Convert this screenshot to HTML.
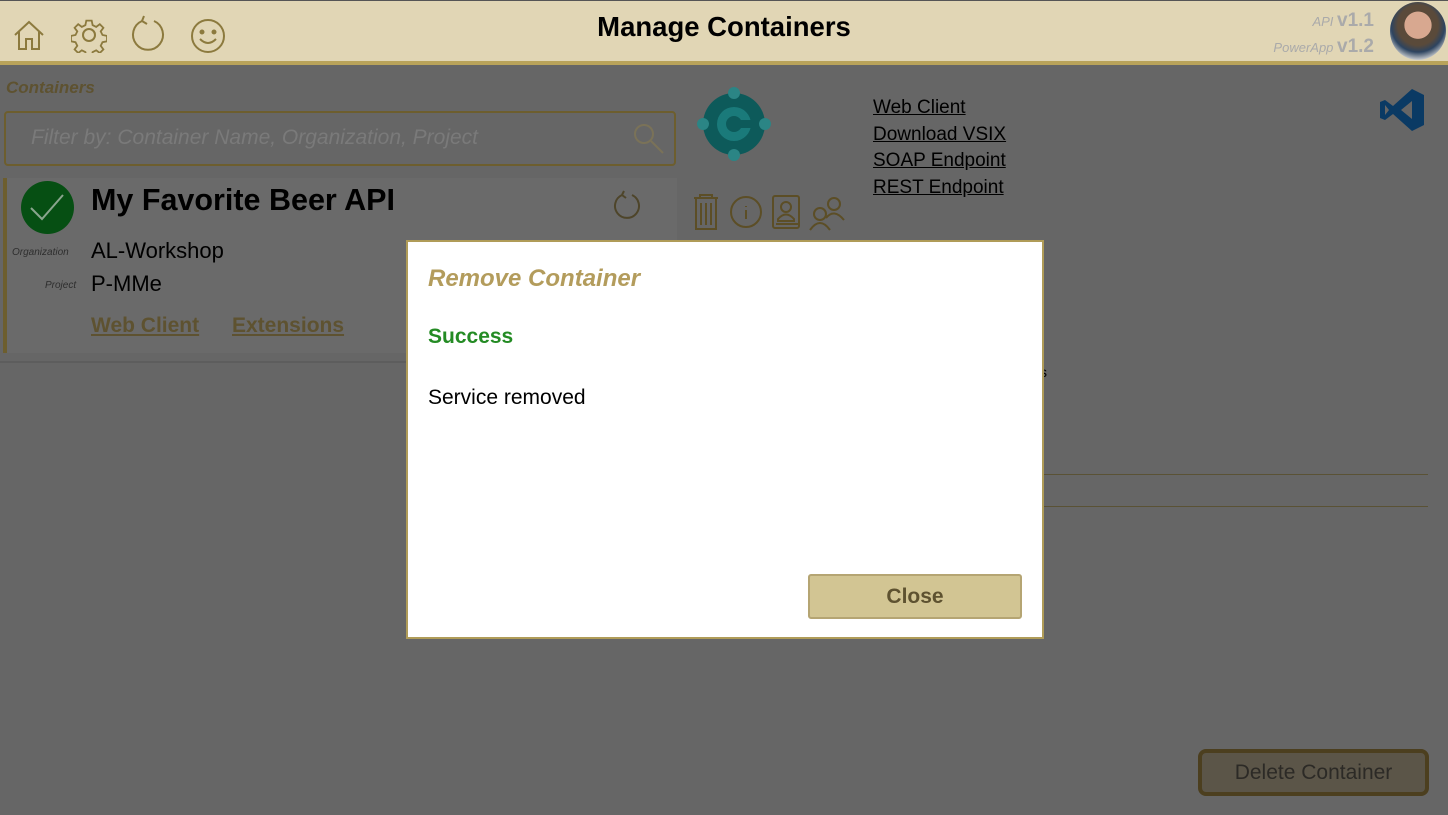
<!DOCTYPE html>
<html><head><meta charset="utf-8"><style>
*{margin:0;padding:0;box-sizing:border-box}
body{width:1448px;height:815px;background:#666;font-family:"Liberation Sans",sans-serif;position:relative;overflow:hidden}
.a{position:absolute}
.hdr{left:0;top:0;width:1448px;height:61px;background:#e1d6b5;border-top:1px solid #555}
.hline{left:0;top:61px;width:1448px;height:4px;background:#b9a35a}
.ul{text-decoration:underline}
</style></head><body>
<div class="a hdr"></div><div class="a hline"></div>
<svg class="a" style="left:12px;top:18px" width="34" height="34" viewBox="0 0 34 34" fill="none" stroke="#8c7a3e" stroke-width="2"><path d="M3 17 L17 4 L31 17 M7 14 V31 H14 V21 H20 V31 H27 V14"/></svg>
<svg class="a" style="left:71px;top:17px" width="36" height="36" viewBox="0 0 36 36" fill="none" stroke="#8c7a3e" stroke-width="2"><circle cx="18" cy="18" r="6"/><path d="M15 3h6l1 5 4 2 4-3 4 4-3 4 2 4 5 1v6l-5 1-2 4 3 4-4 4-4-3-4 2-1 5h-6l-1-5-4-2-4 3-4-4 3-4-2-4-5-1v-6l5-1 2-4-3-4 4-4 4 3 4-2z" transform="scale(.9) translate(2 1)"/></svg>
<svg class="a" style="left:130px;top:15px" width="36" height="40" viewBox="0 0 36 40" fill="none" stroke="#8c7a3e" stroke-width="2"><path d="M12 6 A15 15 0 1 0 24 6"/><path d="M12 6 L14 1 M12 6 L17 9"/></svg>
<svg class="a" style="left:190px;top:18px" width="36" height="36" viewBox="0 0 36 36" fill="none" stroke="#8c7a3e" stroke-width="2"><circle cx="18" cy="18" r="16"/><circle cx="12" cy="14" r="1.5" fill="#8c7a3e"/><circle cx="24" cy="14" r="1.5" fill="#8c7a3e"/><path d="M10 21 Q18 29 26 21"/></svg>
<div class="a" style="left:0;width:1448px;top:11px;text-align:center;font-size:27.5px;font-weight:bold;color:#000">Manage Containers</div>
<div class="a" style="right:74px;top:10px;color:#aaa;font-size:13px;font-style:italic;text-align:right">API <b style="font-style:normal;font-size:19px">v1.1</b></div>
<div class="a" style="right:74px;top:36px;color:#aaa;font-size:13px;font-style:italic;text-align:right">PowerApp <b style="font-style:normal;font-size:19px">v1.2</b></div>
<div class="a" style="left:1390px;top:2px;width:56px;height:58px;border-radius:50%;background:radial-gradient(circle at 50% 40%,#d8a890 0 30%,#5a4a3a 31% 45%,#2d4460 60%,#ddd 80%)"></div>
<div class="a" style="left:6px;top:78px;font-size:17px;font-weight:bold;font-style:italic;color:#5e5230">Containers</div>
<div class="a" style="left:4px;top:111px;width:672px;height:55px;border:2px solid #6d5e2e;border-radius:4px"></div>
<div class="a" style="left:31px;top:126px;font-size:21px;font-style:italic;color:#7a7a7a">Filter by: Container Name, Organization, Project</div>
<svg class="a" style="left:630px;top:120px" width="36" height="36" fill="none" stroke="#7a7258" stroke-width="2"><circle cx="14" cy="14" r="9"/><path d="M21 21 L33 33"/></svg>
<div class="a" style="left:3px;top:178px;width:674px;height:175px;background:#6a6a6a;border-left:4px solid #6d5e2e"></div>
<div class="a" style="left:0;top:361px;width:677px;height:2px;background:#5d5d5d"></div>
<div class="a" style="left:21px;top:181px;width:53px;height:53px;border-radius:50%;background:#064f13"></div>
<svg class="a" style="left:21px;top:181px" width="53" height="53" fill="none" stroke="#8aa58e" stroke-width="2"><path d="M10 27 L21 38 L42 14"/></svg>
<div class="a" style="left:91px;top:183px;font-size:30.5px;font-weight:bold;color:#000">My Favorite Beer API</div>
<svg class="a" style="left:612px;top:190px" width="32" height="32" fill="none" stroke="#4e452a" stroke-width="2"><path d="M10 5 A12 12 0 1 0 20 5 M10 5 L12 1 M10 5 L14 8"/></svg>
<div class="a" style="left:12px;top:247px;font-size:10px;font-style:italic;color:#2e2e2e">Organization</div>
<div class="a" style="left:91px;top:238px;font-size:22px;color:#000">AL-Workshop</div>
<div class="a" style="left:45px;top:280px;font-size:10px;font-style:italic;color:#2e2e2e">Project</div>
<div class="a" style="left:91px;top:271px;font-size:22px;color:#000">P-MMe</div>
<div class="a ul" style="left:91px;top:314px;font-size:21px;font-weight:bold;color:#5e5230">Web Client</div>
<div class="a ul" style="left:232px;top:314px;font-size:21px;font-weight:bold;color:#5e5230">Extensions</div>
<svg class="a" style="left:696px;top:87px" width="76" height="74"><circle cx="38" cy="37" r="31" fill="#0d5a5a"/><circle cx="38" cy="37" r="17" fill="#1a7a7a"/><circle cx="38" cy="37" r="8" fill="#0d5a5a"/><rect x="38" y="33" width="26" height="8" fill="#0d5a5a"/><circle cx="38" cy="6" r="6" fill="#2b8585"/><circle cx="38" cy="68" r="6" fill="#2b8585"/><circle cx="7" cy="37" r="6" fill="#2b8585"/><circle cx="69" cy="37" r="6" fill="#2b8585"/></svg>
<svg class="a" style="left:690px;top:192px" width="160" height="40" fill="none" stroke="#5c4e26" stroke-width="2"><path d="M4 6 H28 M10 6 V3 H22 V6 M6 6 V37 H26 V6 M11 11 V33 M16 11 V33 M21 11 V33"/><circle cx="56" cy="20" r="15"/><path d="M56 14 V15 M56 18 V27"/><rect x="83" y="4" width="26" height="32" rx="2"/><circle cx="96" cy="15" r="5"/><path d="M88 27 Q96 18 104 27 V29 H88 Z M86 32 H108"/><circle cx="130" cy="22" r="6"/><path d="M120 38 Q130 24 140 38"/><circle cx="144" cy="12" r="6"/><path d="M136 26 Q144 16 154 28"/></svg>
<div class="a ul" style="left:873px;top:95px;font-size:19px;color:#000;line-height:26.5px">Web Client<br>Download VSIX<br>SOAP Endpoint<br>REST Endpoint</div>
<svg class="a" style="left:1379px;top:87px" width="46" height="46"><path d="M33 2 L45 8 V38 L33 44 L14 27 L6 33 L1 31 V15 L6 13 L14 19 Z M33 14 L22 23 L33 32 Z M6 18 V28 L10 23 Z" fill="#0a3a64" fill-rule="evenodd"/></svg>
<div class="a" style="left:1040px;top:474px;width:388px;height:1px;background:#5a5235"></div>
<div class="a" style="left:1040px;top:506px;width:388px;height:1px;background:#5a5235"></div>
<div class="a" style="left:1040px;top:364px;font-size:14px;color:#000">s</div>
<div class="a" style="left:1198px;top:749px;width:231px;height:47px;border:4px solid #4c3f1f;border-radius:8px;background:#5b5548;text-align:center;font-size:21px;color:#2c2a26;line-height:39px">Delete Container</div>
<div class="a" style="left:406px;top:240px;width:638px;height:399px;background:#fff;border:2px solid #b09c58"></div>
<div class="a" style="left:428px;top:265px;font-size:24px;font-weight:bold;font-style:italic;color:#b39c5c">Remove Container</div>
<div class="a" style="left:428px;top:325px;font-size:21px;font-weight:bold;color:#248b24">Success</div>
<div class="a" style="left:428px;top:386px;font-size:21px;color:#000">Service removed</div>
<div class="a" style="left:808px;top:574px;width:214px;height:45px;background:#d2c593;border:2px solid #b5a573;border-radius:3px;text-align:center;line-height:41px;font-size:21px;font-weight:bold;color:#5e5230">Close</div>
</body></html>
